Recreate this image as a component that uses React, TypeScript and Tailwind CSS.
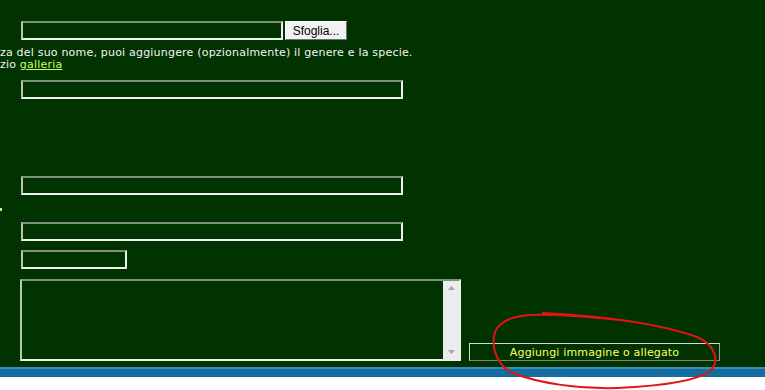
import React from 'react';

const field = 'block h-[19px] border-2 border-t-[#7d8f7d] border-l-[#b8c4b8] border-b-[#eef2ee] border-r-[#eef2ee] bg-[#003300] outline-none';

const App: React.FC = () => {
  return (
    <div className="relative w-[765px] h-[390px] overflow-hidden bg-white" style={{ fontFamily: '"DejaVu Sans", Verdana, sans-serif' }}>
      <div className="flex flex-col h-[367px] bg-[#003300]">
        {/* file picker */}
        <div className="flex items-center mt-[21px] ml-[21px]">
          <input type="text" readOnly className={`${field} w-[262px]`} />
          <button className="ml-[2px] w-[62px] h-[19px] bg-[#f2f2f2] border border-t-white border-l-white border-b-[#707070] border-r-[#707070] text-[12px] text-black leading-none" style={{ fontFamily: '"Liberation Sans", Arial, sans-serif' }}>
            Sfoglia...
          </button>
        </div>

        <div className="mt-[7px] text-[11px] leading-[12px] tracking-[0.2px] text-[#f4f4f4] whitespace-nowrap">
          <p>za del suo nome, puoi aggiungere (opzionalmente) il genere e la specie.</p>
          <p>
            zio <a href="#" className="text-[#ccff66] underline">galleria</a>
          </p>
        </div>

        <input type="text" readOnly className={`${field} w-[382px] ml-[21px] mt-[9px]`} />
        <input type="text" readOnly className={`${field} w-[382px] ml-[21px] mt-[77px]`} />
        <div className="relative">
          <span className="absolute left-0 top-[13px] w-[2px] h-[3px] bg-[#e8e070]"></span>
        </div>
        <input type="text" readOnly className={`${field} w-[382px] ml-[21px] mt-[27px]`} />
        <input type="text" readOnly className={`${field} w-[106px] ml-[21px] mt-[9px]`} />

        <div className="flex items-end mt-[10px] ml-[20px]">
          <div className="flex w-[441px] h-[82px] border-2 border-t-[#7d8f7d] border-l-[#b8c4b8] border-b-[#eef2ee] border-r-[#eef2ee] bg-[#003300]">
            <div className="flex-1"></div>
            <div className="w-[16px] bg-[#ececec] flex flex-col items-center justify-between py-[5px]">
              <svg width="7" height="4" viewBox="0 0 7 4"><path d="M0 4 L3.5 0 L7 4 Z" fill="#a8a8a8" /></svg>
              <svg width="7" height="4" viewBox="0 0 7 4"><path d="M0 0 L3.5 4 L7 0 Z" fill="#a8a8a8" /></svg>
            </div>
          </div>
          <button className="ml-[8px] w-[251px] h-[18px] bg-[#003300] border border-t-[#d8d8d8] border-l-[#d8d8d8] border-b-[#808080] border-r-[#9a9a9a] text-[11px] tracking-[0.15px] leading-none text-[#ffff66]">
            Aggiungi immagine o allegato
          </button>
        </div>
      </div>

      <div className="h-[10px] border-t-2 border-[#3a8cbc] bg-[#156c9f]"></div>

      <svg className="absolute left-0 top-0 pointer-events-none" width="765" height="390" viewBox="0 0 765 390">
        <path
          d="M543 313 C 600 316, 655 322, 697 337 C 716 345, 720 362, 710 371 C 697 381, 660 386, 617 388 C 580 389, 540 384, 510 372 C 495 362, 491 345, 495 332 C 500 320, 515 316, 530 315 C 560 314, 590 317, 620 320"
          fill="none"
          stroke="#e01414"
          strokeWidth="2"
          strokeLinecap="round"
        />
      </svg>
    </div>
  );
};

export default App;
